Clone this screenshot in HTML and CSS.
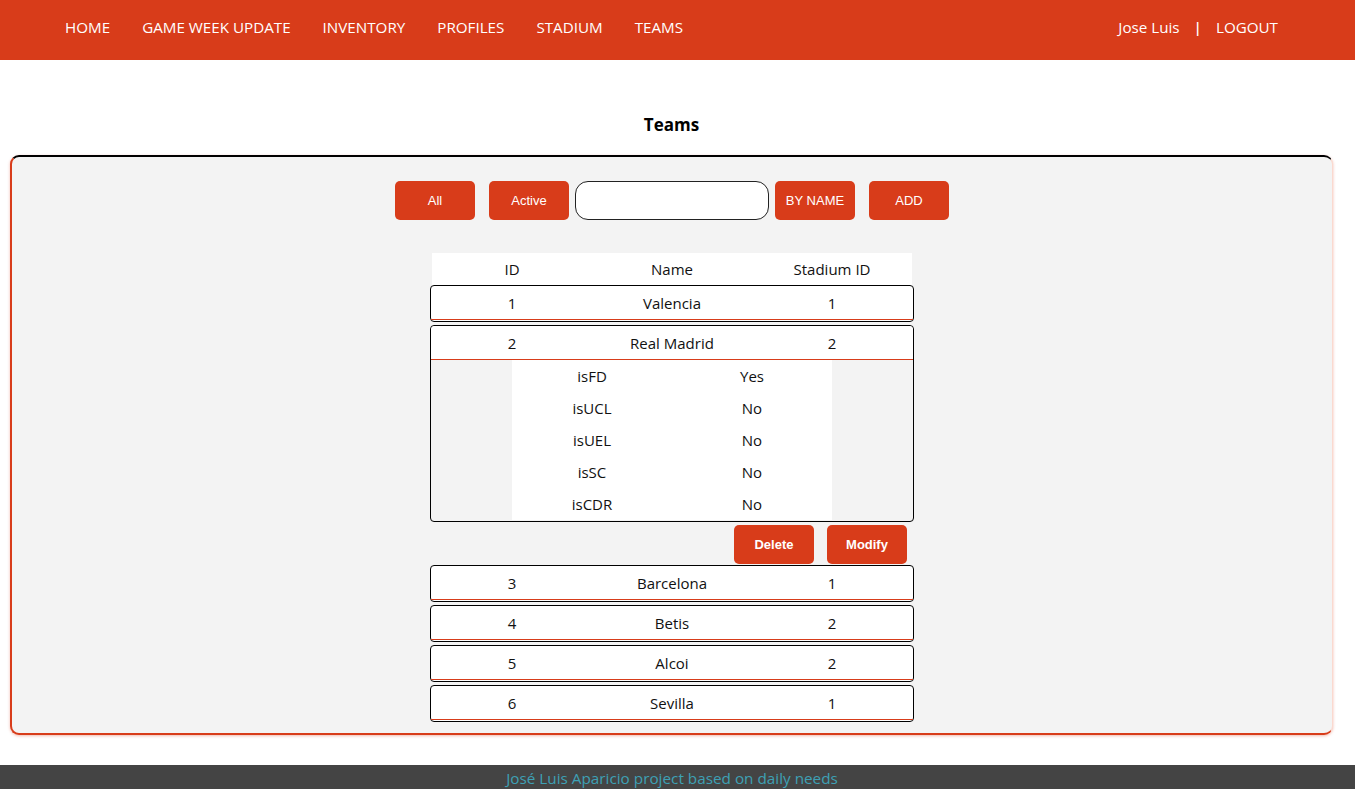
FILE: index.html
```html
<!DOCTYPE html>
<html lang="en">
<head>
<meta charset="utf-8">
<title>Teams</title>
<link rel="stylesheet" href="styles.css">
</head>
<body>
<header class="topbar">
  <nav class="nav-left">
    <a href="#">HOME</a>
    <a href="#">GAME WEEK UPDATE</a>
    <a href="#">INVENTORY</a>
    <a href="#">PROFILES</a>
    <a href="#">STADIUM</a>
    <a href="#">TEAMS</a>
  </nav>
  <div class="nav-right">
    <span class="user">Jose Luis</span>
    <span class="sep">|</span>
    <a href="#">LOGOUT</a>
  </div>
</header>

<main class="content">
  <h2 class="title">Teams</h2>
  <section class="panel">
    <div class="toolbar">
      <button class="btn">All</button>
      <button class="btn">Active</button>
      <input class="search" type="text">
      <button class="btn btn-byname">BY NAME</button>
      <button class="btn">ADD</button>
    </div>

    <div class="table">
      <div class="thead">
        <span>ID</span><span>Name</span><span>Stadium ID</span>
      </div>

      <div class="row">
        <div class="row-main"><span>1</span><span>Valencia</span><span>1</span></div>
      </div>

      <div class="row row-open">
        <div class="row-main"><span>2</span><span>Real Madrid</span><span>2</span></div>
        <div class="details">
          <div class="drow"><span>isFD</span><span>Yes</span></div>
          <div class="drow"><span>isUCL</span><span>No</span></div>
          <div class="drow"><span>isUEL</span><span>No</span></div>
          <div class="drow"><span>isSC</span><span>No</span></div>
          <div class="drow"><span>isCDR</span><span>No</span></div>
        </div>
      </div>
      <div class="actions">
        <button class="btn btn-bold">Delete</button>
        <button class="btn btn-bold">Modify</button>
      </div>

      <div class="row">
        <div class="row-main"><span>3</span><span>Barcelona</span><span>1</span></div>
      </div>
      <div class="row">
        <div class="row-main"><span>4</span><span>Betis</span><span>2</span></div>
      </div>
      <div class="row">
        <div class="row-main"><span>5</span><span>Alcoi</span><span>2</span></div>
      </div>
      <div class="row">
        <div class="row-main"><span>6</span><span>Sevilla</span><span>1</span></div>
      </div>
    </div>
  </section>
</main>

<footer class="footer">José Luis Aparicio project based on daily needs</footer>
</body>
</html>
```

FILE: styles.css
```css
* { box-sizing: border-box; }

html, body {
  margin: 0;
  padding: 0;
  background: #ffffff;
  font-family: "Open Sans", "Noto Sans", "DejaVu Sans", sans-serif;
  color: #111111;
}

a { color: inherit; text-decoration: none; }

.topbar {
  height: 60px;
  background: #d83c1a;
  color: #ffffff;
  display: flex;
  justify-content: space-between;
  padding: 17px 77px 0 65px;
  font-size: 15.2px;
  line-height: 20px;
}

.nav-left {
  display: flex;
  gap: 32px;
}

.nav-right {
  display: flex;
  gap: 14px;
}

.nav-right .sep {
  font-weight: 600;
}

.content {
  margin: 0 22px 0 10px;
}

.title {
  margin: 53px 0 18px;
  text-align: center;
  font-size: 17px;
  line-height: 24px;
  font-weight: 700;
  color: #000;
}

.panel {
  background: #f3f3f3;
  border-top: 2px solid #000;
  border-left: 2px solid #d83c1a;
  border-bottom: 2px solid #d83c1a;
  border-right: 1px solid #fbd9cf;
  border-radius: 9px;
  box-shadow: 0 1px 3px rgba(216, 60, 26, 0.35);
  padding: 24px 0 8px;
}

.toolbar {
  display: flex;
  justify-content: center;
  align-items: center;
  height: 39px;
}

.btn {
  width: 80px;
  height: 39px;
  border: none;
  border-radius: 5px;
  background: #d83c1a;
  color: #ffffff;
  font-family: "Liberation Sans", Arial, sans-serif;
  font-size: 13px;
  padding: 0;
  margin: 0 7px;
}

.btn-bold { font-weight: 700; }

.search {
  width: 194px;
  height: 39px;
  border: 1px solid #222;
  border-radius: 13px;
  background: #fff;
  margin: 0;
  padding: 0 10px;
}

.toolbar .btn:nth-child(2) { margin-right: 6px; }
.toolbar .btn-byname { margin-left: 6px; }

.table {
  width: 484px;
  margin: 33px auto 0;
  font-size: 15px;
}

.thead {
  margin: 0 2px;
  height: 32px;
  background: #ffffff;
  display: grid;
  grid-template-columns: 160px 160px 160px;
  align-items: center;
  text-align: center;
}

.row {
  border: 1px solid #000;
  border-radius: 4px;
  background: #ffffff;
  padding-bottom: 1px;
  margin-bottom: 3px;
}

.row-main {
  height: 34px;
  display: grid;
  grid-template-columns: 160px 160px 160px;
  align-items: center;
  text-align: center;
  padding-left: 1px;
  border-bottom: 1px solid #d83c1a;
}

.row-open {
  background: #f3f3f3;
  padding-bottom: 1px;
  margin-bottom: 3px;
}

.row-open .row-main {
  background: #ffffff;
  border-top-left-radius: 4px;
  border-top-right-radius: 4px;
}

.details {
  width: 320px;
  margin: 0 auto;
  background: #ffffff;
}

.drow {
  height: 32px;
  display: grid;
  grid-template-columns: 160px 160px;
  align-items: center;
  text-align: center;
}

.actions {
  display: flex;
  justify-content: flex-end;
  height: 40px;
}

.actions .btn:last-child { margin-left: 6px; }

.footer {
  margin-top: 30px;
  height: 30px;
  padding-right: 11px;
  background: #444444;
  color: #3ea0b4;
  text-align: center;
  font-size: 15.3px;
  line-height: 26px;
}
```
